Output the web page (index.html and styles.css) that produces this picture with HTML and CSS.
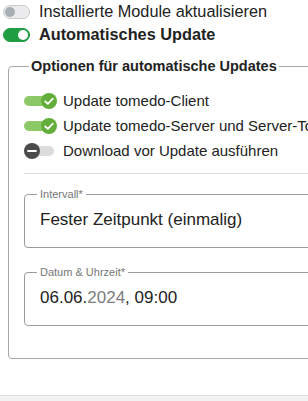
FILE: index.html
```html
<!DOCTYPE html>
<html lang="de">
<head>
    <meta charset="UTF-8">
    <meta name="viewport" content="width=device-width, initial-scale=1.0">
    <title>Automatische Updates</title>
    <link rel="stylesheet" href="styles.css">
</head>
<body>
    <div id="page">
        <div class="switch-row">
            <span class="switch"><span class="knob"></span></span>
            <span class="switch-label">Installierte Module aktualisieren</span>
        </div>
        <div class="switch-row">
            <span class="switch on"><span class="knob"></span></span>
            <span class="switch-label bold">Automatisches Update</span>
        </div>

        <fieldset class="options">
            <legend>Optionen für automatische Updates</legend>

            <div class="opt-row">
                <span class="opt-toggle checked">
                    <span class="opt-knob">
                        <svg viewBox="0 0 16 16" width="16" height="16"><path d="M4.2 8.3l2.6 2.6 5-5.3" fill="none" stroke="#fff" stroke-width="1.8" stroke-linecap="round" stroke-linejoin="round"/></svg>
                    </span>
                </span>
                <span class="opt-label">Update tomedo-Client</span>
            </div>
            <div class="opt-row">
                <span class="opt-toggle checked">
                    <span class="opt-knob">
                        <svg viewBox="0 0 16 16" width="16" height="16"><path d="M4.2 8.3l2.6 2.6 5-5.3" fill="none" stroke="#fff" stroke-width="1.8" stroke-linecap="round" stroke-linejoin="round"/></svg>
                    </span>
                </span>
                <span class="opt-label">Update tomedo-Server und Server-Tools</span>
            </div>
            <div class="opt-row">
                <span class="opt-toggle">
                    <span class="opt-knob">
                        <svg viewBox="0 0 16 16" width="16" height="16"><path d="M4 8h8" fill="none" stroke="#fff" stroke-width="1.8" stroke-linecap="round"/></svg>
                    </span>
                </span>
                <span class="opt-label">Download vor Update ausführen</span>
            </div>

            <div class="divider"></div>

            <fieldset class="field">
                <legend>Intervall*</legend>
                <div class="field-value">Fester Zeitpunkt (einmalig)</div>
            </fieldset>

            <fieldset class="field">
                <legend>Datum &amp; Uhrzeit*</legend>
                <div class="field-value">06.06.<span class="dim">2024</span>, 09:00</div>
            </fieldset>
        </fieldset>
    </div>
    <div id="footer"></div>
</body>
</html>
```

FILE: styles.css
```css
body {
    font-family: "Liberation Sans", Arial, sans-serif;
    color: #222;
    background-color: #fff;
    margin: 0;
    padding: 0;
    width: 308px;
    height: 401px;
    overflow: hidden;
    position: relative;
}
#page {
    padding: 0 0 0 3px;
    width: 560px;
}
.switch-row {
    display: flex;
    align-items: center;
    height: 23px;
}
.switch {
    display: inline-block;
    box-sizing: border-box;
    width: 27px;
    height: 14px;
    border-radius: 7px;
    background-color: #ececee;
    border: 1px solid #c9cbce;
    position: relative;
    margin-right: 9px;
}
.switch .knob {
    position: absolute;
    top: 1px;
    left: 1px;
    width: 10px;
    height: 10px;
    border-radius: 50%;
    background-color: #a8adb4;
}
.switch.on {
    background-color: #1f9d43;
    border-color: #1f9d43;
}
.switch.on .knob {
    left: auto;
    right: 1px;
    background-color: #fff;
}
.switch-label {
    font-size: 16.3px;
}
.bold {
    font-weight: bold;
}
.options {
    margin: 12px 0 0 5px;
    padding: 14px 0 32px 15px;
    border: 1px solid #a4a8ad;
    border-radius: 4px;
}
.options > legend {
    font-size: 14.5px;
    font-weight: bold;
    margin-left: 5px;
    padding: 0 2px;
}
.opt-row {
    display: flex;
    align-items: center;
    height: 25px;
}
.opt-toggle {
    position: relative;
    width: 33px;
    height: 16px;
    margin-right: 6px;
}
.opt-toggle::before {
    content: "";
    position: absolute;
    left: 0;
    top: 3px;
    width: 30px;
    height: 10px;
    border-radius: 5px;
    background-color: #dcdcdc;
}
.opt-knob {
    position: absolute;
    left: 0;
    top: 0;
    width: 16px;
    height: 16px;
    border-radius: 50%;
    background-color: #4b4b4b;
    display: flex;
}
.opt-toggle.checked::before {
    background-color: #8cc866;
}
.opt-toggle.checked .opt-knob {
    left: 17px;
    background-color: #63ad3a;
}
.opt-label {
    font-size: 15px;
}
.divider {
    height: 1px;
    background-color: #dedede;
    margin: 10px 0 14px 0;
}
.field {
    margin: 0 0 18px 0;
    padding: 10px 15px 17px 15px;
    border: 1px solid #9b9b9b;
    border-radius: 4px;
}
.field:last-child {
    margin-bottom: 0;
}
.field legend {
    font-size: 11px;
    color: #777;
    padding: 0 3px;
    margin-left: -3px;
}
.field-value {
    font-size: 17px;
    color: #222;
}
.dim {
    color: #7c7c7c;
}
#footer {
    position: absolute;
    left: 0;
    right: 0;
    bottom: 0;
    height: 5px;
    background-color: #f2f2f2;
    border-top: 1px solid #dedede;
}
```
